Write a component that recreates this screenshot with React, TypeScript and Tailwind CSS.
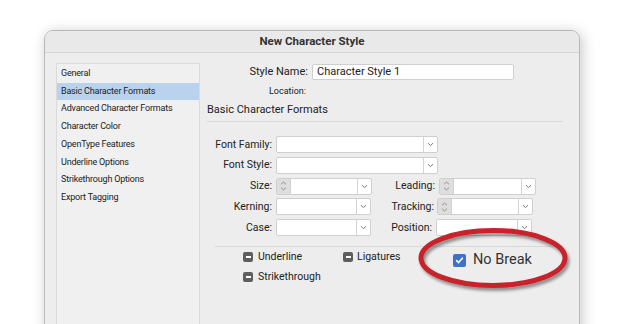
import React from "react";

const font = { fontFamily: "Roboto, 'Noto Sans', sans-serif" };

function Chevron() {
  return (
    <svg width="7" height="5" viewBox="0 0 7 5" className="block">
      <path d="M1 1.2 L3.5 3.6 L6 1.2" fill="none" stroke="#777" strokeWidth="1" />
    </svg>
  );
}

function Stepper() {
  return (
    <div className="flex h-full w-[14px] flex-col items-center justify-center gap-[2px] bg-[#dedede] border-r border-[#d2d2d2]">
      <svg width="7" height="4" viewBox="0 0 7 4"><path d="M1 3.3 L3.5 1 L6 3.3" fill="none" stroke="#888" strokeWidth="0.9" /></svg>
      <svg width="7" height="4" viewBox="0 0 7 4"><path d="M1 0.7 L3.5 3 L6 0.7" fill="none" stroke="#888" strokeWidth="0.9" /></svg>
    </div>
  );
}

function Combo({ w, stepper }: { w: string; stepper?: boolean }) {
  return (
    <div className={`flex h-[17px] ${w} items-stretch overflow-hidden rounded-[2px] border border-[#cfcfcf] bg-white`}>
      {stepper && <Stepper />}
      <div className="flex-1" />
      <div className="flex w-[14px] items-center justify-center border-l border-[#d4d4d4]">
        <Chevron />
      </div>
    </div>
  );
}

function MinusBox() {
  return (
    <span className="flex h-[10px] w-[10px] items-center justify-center rounded-[2px] bg-[#5e5e5e]">
      <span className="h-[1.5px] w-[5px] bg-white" />
    </span>
  );
}

const navItems = [
  "General",
  "Basic Character Formats",
  "Advanced Character Formats",
  "Character Color",
  "OpenType Features",
  "Underline Options",
  "Strikethrough Options",
  "Export Tagging",
];

export default function App() {
  return (
    <div className="relative h-[324px] w-[625px] overflow-hidden bg-white text-[#222]" style={font}>
      <div className="pl-[44px] pt-[30px]">
        <div className="h-[310px] w-[536px] overflow-hidden rounded-t-[9px] border border-[#b9b9b9] bg-[#ededed] shadow-[2px_2px_14px_rgba(0,0,0,0.22)]">
          {/* title bar */}
          <div className="flex h-[22px] items-center justify-center border-b border-[#d6d6d6] bg-[#e9e9e9] text-[11.5px] font-bold text-[#333]">
            New Character Style
          </div>
          <div className="flex pl-[11px] pt-[10px]">
            {/* left nav */}
            <div className="h-[280px] w-[144px] border border-[#dadada] bg-[#f0f0f0] py-[1px]">
              {navItems.map((t, i) => (
                <div
                  key={t}
                  className={`flex h-[17.7px] items-center pl-[4px] text-[9px] tracking-[-0.2px] ${i === 1 ? "bg-[#b9d3ee]" : ""}`}
                >
                  {t}
                </div>
              ))}
            </div>
            {/* right content */}
            <div className="flex flex-1 flex-col">
              <div className="flex h-[18px] items-center">
                <div className="w-[108px] text-right text-[11px]">Style Name:</div>
                <div className="ml-[4px] flex h-[16px] w-[202px] items-center rounded-[2px] border border-[#cfcfcf] bg-white pl-[4px] text-[11px]">
                  Character Style 1
                </div>
              </div>
              <div className="mt-[5px] flex h-[12px] items-center">
                <div className="w-[106px] text-right text-[9px]">Location:</div>
              </div>
              <div className="ml-[7px] mt-[5px] text-[11px] leading-[14px]">Basic Character Formats</div>
              <div className="ml-[7px] mt-[4px] h-px w-[356px] bg-[#d9d9d9]" />
              <div className="mt-[14px] flex flex-col gap-[3.8px] text-[10.5px]">
                <div className="flex h-[17px] items-center">
                  <div className="w-[72px] text-right">Font Family:</div>
                  <div className="ml-[4px]"><Combo w="w-[162px]" /></div>
                </div>
                <div className="flex h-[17px] items-center">
                  <div className="w-[72px] text-right">Font Style:</div>
                  <div className="ml-[4px]"><Combo w="w-[162px]" /></div>
                </div>
                <div className="flex h-[17px] items-center">
                  <div className="w-[72px] text-right">Size:</div>
                  <div className="ml-[4px]"><Combo w="w-[96px]" stepper /></div>
                  <div className="w-[63px] text-right">Leading:</div>
                  <div className="ml-[4px]"><Combo w="w-[97px]" stepper /></div>
                </div>
                <div className="flex h-[17px] items-center">
                  <div className="w-[72px] text-right">Kerning:</div>
                  <div className="ml-[4px]"><Combo w="w-[95px]" /></div>
                  <div className="w-[63px] text-right">Tracking:</div>
                  <div className="ml-[3px]"><Combo w="w-[96px]" stepper /></div>
                </div>
                <div className="flex h-[17px] items-center">
                  <div className="w-[72px] text-right">Case:</div>
                  <div className="ml-[4px]"><Combo w="w-[95px]" /></div>
                  <div className="w-[61px] text-right">Position:</div>
                  <div className="ml-[4px]"><Combo w="w-[96px]" /></div>
                </div>
              </div>
              <div className="ml-[15px] mt-[10px] h-px w-[348px] bg-[#d9d9d9]" />
              <div className="ml-[43px] mt-[4px] flex flex-col gap-[8px] text-[10.5px]">
                <div className="flex h-[12px] items-center">
                  <MinusBox />
                  <span className="ml-[5px] w-[85px]">Underline</span>
                  <MinusBox />
                  <span className="ml-[4px]">Ligatures</span>
                </div>
                <div className="flex h-[12px] items-center">
                  <MinusBox />
                  <span className="ml-[5px]">Strikethrough</span>
                </div>
              </div>
            </div>
          </div>
        </div>
      </div>

      {/* callout */}
      <div className="absolute left-[453px] top-[253px] flex items-center">
        <span className="flex h-[13px] w-[13px] items-center justify-center rounded-[2px] bg-[#3b73cc]">
          <svg width="9" height="9" viewBox="0 0 9 9">
            <path d="M1.6 4.6 L3.6 6.6 L7.4 2.2" fill="none" stroke="white" strokeWidth="1.6" strokeLinecap="round" strokeLinejoin="round" />
          </svg>
        </span>
        <span className="ml-[7px] text-[14.5px] leading-[14px] text-[#333]">No Break</span>
      </div>
      <svg className="pointer-events-none absolute left-0 top-0" width="625" height="324">
        <defs>
          <filter id="sh" x="-20%" y="-40%" width="140%" height="180%">
            <feDropShadow dx="2" dy="3" stdDeviation="1.5" floodColor="#000" floodOpacity="0.4" />
          </filter>
        </defs>
        <ellipse cx="493" cy="258" rx="72" ry="27.5" fill="none" stroke="#c8222b" strokeWidth="5" filter="url(#sh)" />
      </svg>
    </div>
  );
}
